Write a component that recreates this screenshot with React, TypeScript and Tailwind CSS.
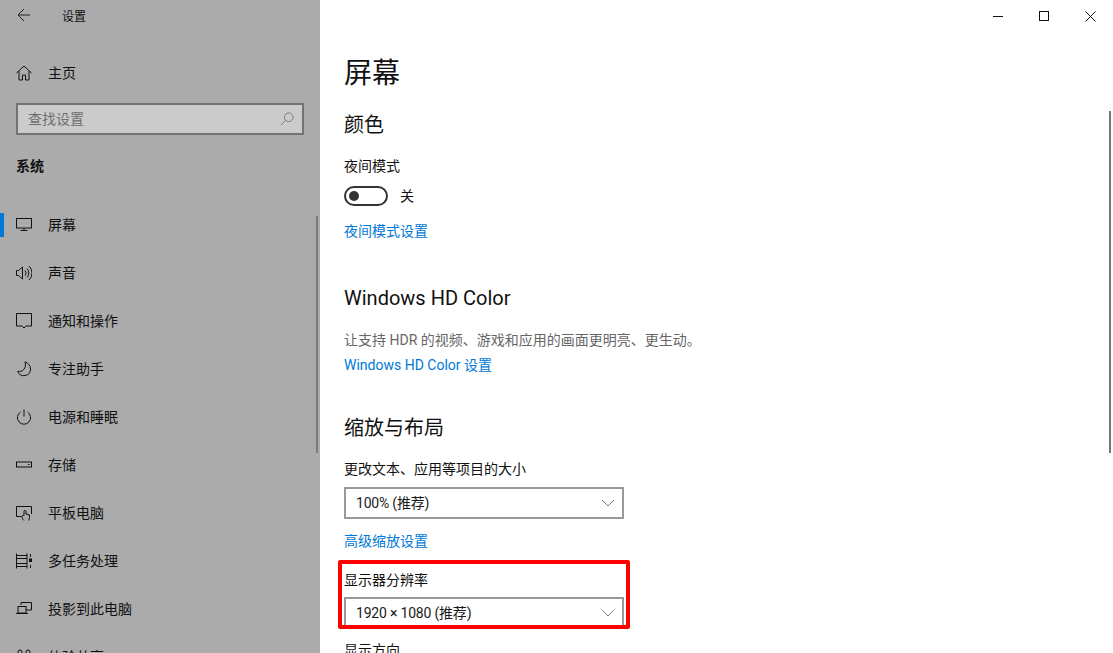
import React from 'react';

const font = "font-['Roboto','Noto_Sans_CJK_SC',sans-serif]";

const icons: Record<string, React.ReactNode> = {
  display: (
    <>
      <rect x=".5" y="1.500" width="15" height="9.500" />
      <path d="M8 11v2.500M4.500 13.500h7" />
    </>
  ),
  sound: (
    <>
      <path d="M.5 5.500h2L6.500 2v12l-4-3.500h-2z" />
      <path d="M9 5.500a3.500 3.500 0 0 1 0 5M11 3.500a6.500 6.500 0 0 1 0 9M13 1a9.500 9.500 0 0 1 0 14" />
    </>
  ),
  notify: <path d="M.5.500h15v12.500H10l-2 2-2-2H.5z" />,
  moon: <path d="M9 .8c3 1 5.500 3.800 5.500 7.200a6.600 6.600 0 0 1-12.800 2.300C6.500 11.500 11 7 9 .8z" />,
  power: (
    <>
      <path d="M8 .5v7" />
      <path d="M4.500 3a6.600 6.600 0 1 0 7 0" />
    </>
  ),
  storage: (
    <>
      <rect x=".5" y="5" width="15" height="5" />
      <path d="M12 7.500h1.500" />
    </>
  ),
  tablet: (
    <>
      <path d="M5.500 11.500H.5v-10h15v7.500" />
      <path d="M8 15.500c-1-1-2-2-2-4 0-1 .8-1.500 2-1V6.500a1 1 0 0 1 2 0V9l3.500 1v2.500l-.8 3" />
    </>
  ),
  multi: (
    <>
      <path d="M.5.500v15M1 2.500h10M11 .5v15M1 5.500h10M1 10.500h10M1 13.500h10M14.500 1v3M14.500 12v3" />
      <rect x="13.500" y="6" width="2" height="2.500" fill="currentColor" />
    </>
  ),
  project: (
    <>
      <path d="M5 4V1.500h10.500V9H10" />
      <rect x="2" y="5.500" width="8" height="6.500" />
      <path d="M0 12.500h12" />
    </>
  ),
  share: (
    <>
      <circle cx="4" cy="3" r="2" />
      <circle cx="12" cy="3" r="2" />
    </>
  ),
};

const navItems = [
  { label: '屏幕', icon: 'display', active: true },
  { label: '声音', icon: 'sound' },
  { label: '通知和操作', icon: 'notify' },
  { label: '专注助手', icon: 'moon' },
  { label: '电源和睡眠', icon: 'power' },
  { label: '存储', icon: 'storage' },
  { label: '平板电脑', icon: 'tablet' },
  { label: '多任务处理', icon: 'multi' },
  { label: '投影到此电脑', icon: 'project' },
  { label: '体验共享', icon: 'share' },
];

function NavIcon({ name }: { name: string }) {
  return (
    <svg viewBox="0 0 16 16" fill="none" stroke="currentColor" strokeWidth="1" className="w-4 h-4 shrink-0">
      {icons[name]}
    </svg>
  );
}

function Select({ value }: { value: string }) {
  return (
    <div className="w-[280px] h-8 border-2 border-[#999999] bg-white flex items-center justify-between pl-[10px] pr-[8px] text-[14px] tracking-[-0.2px] leading-none text-[#1a1a1a]">
      <span>{value}</span>
      <svg viewBox="0 0 12 6" fill="none" stroke="#777777" strokeWidth="1" className="w-3 h-[6px]">
        <path d="M0 0l6 6 6-6" />
      </svg>
    </div>
  );
}

function Link({ children }: { children: React.ReactNode }) {
  return <div className="text-[14px] leading-5 text-[#0078d7]">{children}</div>;
}

export default function App() {
  return (
    <div className={`${font} w-[1113px] h-[653px] flex overflow-hidden bg-white text-black relative`}>
      <aside className="w-[320px] h-full shrink-0 bg-[#ababab] flex flex-col relative overflow-hidden">
        <div className="h-8 flex items-center pl-4 shrink-0">
          <svg viewBox="0 0 16 16" fill="none" stroke="#222222" strokeWidth="1" className="w-4 h-4 -translate-y-[1px]">
            <path d="M14 8H2.500M8 2 2 8l6 6" />
          </svg>
          <span className="ml-[30px] text-[12px] leading-none text-[#111111] translate-y-[1px]">设置</span>
        </div>
        <div className="h-[48px] mt-[17px] flex items-center pl-4 shrink-0 text-[14px] text-[#111111]">
          <svg viewBox="0 0 16 16" fill="none" stroke="currentColor" strokeWidth="1" className="w-4 h-4">
            <path d="M.5 8 8 1l7.500 7M3 6v9h3.500v-5h3v5H13V6" />
          </svg>
          <span className="ml-4">主页</span>
        </div>
        <div className="mx-4 h-8 mt-[6px] shrink-0 border-2 border-[#737373] bg-[#cbcbcb] flex items-center justify-between pl-[10px] pr-[8px] text-[14px] text-[#6e6e6e]">
          <span>查找设置</span>
          <svg viewBox="0 0 16 16" fill="none" stroke="#757575" strokeWidth="1" className="w-[14px] h-[14px]">
            <circle cx="10" cy="6" r="5" />
            <path d="M6.500 9.500 1 15" />
          </svg>
        </div>
        <div className="pl-4 mt-[21px] text-[14px] leading-5 font-bold text-[#111111] shrink-0">系统</div>
        <nav className="mt-[25px] flex flex-col shrink-0">
          {navItems.map((item) => (
            <div key={item.label} className="h-12 flex items-center pl-4 relative text-[#111111]">
              {item.active && <div className="absolute left-0 top-3 w-1 h-6 bg-[#0078d7]" />}
              <NavIcon name={item.icon} />
              <span className="ml-4 text-[14px] leading-none">{item.label}</span>
            </div>
          ))}
        </nav>
        <div className="absolute left-[316px] top-[216px] w-[2px] h-[237px] bg-[#7a7a7a]" />
      </aside>

      <main className="flex-1 min-w-0 pl-6">
        <h1 className="mt-[53px] text-[28px] leading-[42px] text-[#111111]">屏幕</h1>
        <h2 className="mt-[15px] text-[20px] leading-[30px] text-[#111111]">颜色</h2>
        <div className="mt-[16px] text-[14px] leading-5 text-[#111111]">夜间模式</div>
        <div className="mt-[9px] h-[22px] flex items-center">
          <div className="w-11 h-5 rounded-full border-2 border-[#333333] flex items-center pl-[3px]">
            <div className="w-[10px] h-[10px] rounded-full bg-[#333333]" />
          </div>
          <span className="ml-3 text-[14px] leading-none text-[#111111]">关</span>
        </div>
        <div className="mt-[14px]">
          <Link>夜间模式设置</Link>
        </div>
        <h2 className="mt-[42px] text-[20px] leading-[30px] text-[#111111]">Windows HD Color</h2>
        <div className="mt-[17px] text-[14px] leading-5 text-[#666666]">让支持 HDR 的视频、游戏和应用的画面更明亮、更生动。</div>
        <div className="mt-[5px]">
          <Link>Windows HD Color 设置</Link>
        </div>
        <h2 className="mt-[38px] text-[20px] leading-[30px] text-[#111111]">缩放与布局</h2>
        <div className="mt-[16px] text-[14px] leading-5 text-[#111111]">更改文本、应用等项目的大小</div>
        <div className="mt-2">
          <Select value="100% (推荐)" />
        </div>
        <div className="mt-[12px]">
          <Link>高级缩放设置</Link>
        </div>
        <div className="mt-[19px] text-[14px] leading-5 text-[#111111]">显示器分辨率</div>
        <div className="mt-[7px]">
          <Select value="1920 × 1080 (推荐)" />
        </div>
        <div className="mt-[11px] text-[14px] leading-5 text-[#111111]">显示方向</div>
      </main>

      <div className="absolute left-[338px] top-[560px] w-[292px] h-[69px] border-4 border-[#fe0000] rounded-[2px] pointer-events-none" />

      <div className="absolute left-[1109px] top-[111px] w-[2px] h-[342px] bg-[#767676]" />

      <div className="absolute right-0 top-0 flex text-[#111111]">
        <div className="w-[46px] h-8 flex items-center justify-center">
          <div className="w-[10px] h-px bg-[#111111]" />
        </div>
        <div className="w-[46px] h-8 flex items-center justify-center">
          <div className="w-[10px] h-[10px] border border-[#111111]" />
        </div>
        <div className="w-[46px] h-8 flex items-center justify-center">
          <svg viewBox="0 0 11 11" fill="none" stroke="#111111" strokeWidth="1" className="w-[11px] h-[11px]">
            <path d="M.5.500l10 10M10.500.500l-10 10" />
          </svg>
        </div>
      </div>
    </div>
  );
}
